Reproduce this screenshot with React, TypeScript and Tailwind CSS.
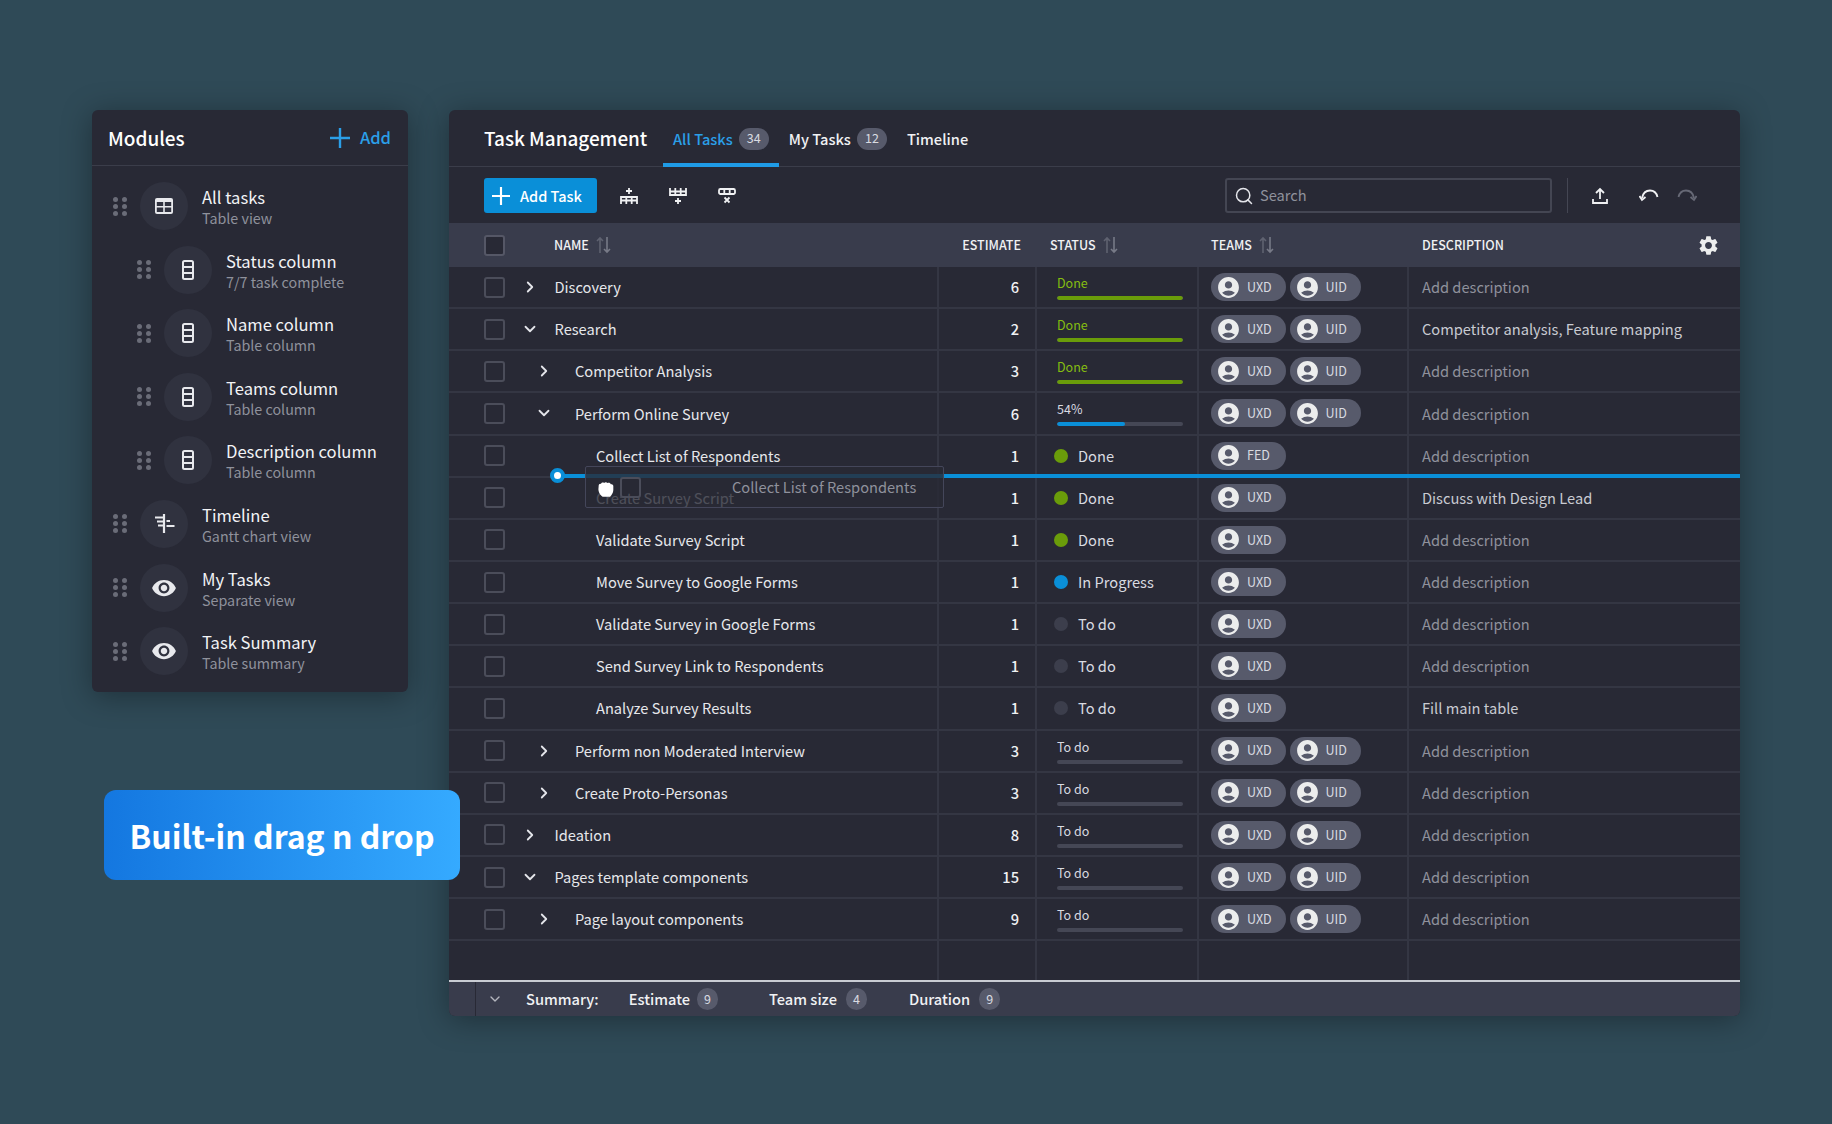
import React from "react";
import { ChevronDown, ChevronRight, Search } from "lucide-react";
import { MdAccountCircle, MdSettings, MdVisibility } from "react-icons/md";

type Status =
  | { kind: "bar"; label: string; value: number; tone: "green" | "blue" | "none" }
  | { kind: "dot"; label: string; tone: "green" | "blue" | "none" };

type Row = {
  name: string;
  level: 0 | 1 | 2;
  open?: boolean;
  estimate: number;
  status: Status;
  teams: string[];
  description?: string;
};

const barDone: Status = { kind: "bar", label: "Done", value: 100, tone: "green" };
const barTodo: Status = { kind: "bar", label: "To do", value: 0, tone: "none" };
const dotDone: Status = { kind: "dot", label: "Done", tone: "green" };
const dotTodo: Status = { kind: "dot", label: "To do", tone: "none" };
const both = ["UXD", "UID"];

const rows: Row[] = [
  { name: "Discovery", level: 0, open: false, estimate: 6, status: barDone, teams: both },
  { name: "Research", level: 0, open: true, estimate: 2, status: barDone, teams: both, description: "Competitor analysis, Feature mapping" },
  { name: "Competitor Analysis", level: 1, open: false, estimate: 3, status: barDone, teams: both },
  { name: "Perform Online Survey", level: 1, open: true, estimate: 6, status: { kind: "bar", label: "54%", value: 54, tone: "blue" }, teams: both },
  { name: "Collect List of Respondents", level: 2, estimate: 1, status: dotDone, teams: ["FED"] },
  { name: "Create Survey Script", level: 2, estimate: 1, status: dotDone, teams: ["UXD"], description: "Discuss with Design Lead" },
  { name: "Validate Survey Script", level: 2, estimate: 1, status: dotDone, teams: ["UXD"] },
  { name: "Move Survey to Google Forms", level: 2, estimate: 1, status: { kind: "dot", label: "In Progress", tone: "blue" }, teams: ["UXD"] },
  { name: "Validate Survey in Google Forms", level: 2, estimate: 1, status: dotTodo, teams: ["UXD"] },
  { name: "Send Survey Link to Respondents", level: 2, estimate: 1, status: dotTodo, teams: ["UXD"] },
  { name: "Analyze Survey Results", level: 2, estimate: 1, status: dotTodo, teams: ["UXD"], description: "Fill main table" },
  { name: "Perform non Moderated Interview", level: 1, open: false, estimate: 3, status: barTodo, teams: both },
  { name: "Create Proto-Personas", level: 1, open: false, estimate: 3, status: barTodo, teams: both },
  { name: "Ideation", level: 0, open: false, estimate: 8, status: barTodo, teams: both },
  { name: "Pages template components", level: 0, open: true, estimate: 15, status: barTodo, teams: both },
  { name: "Page layout components", level: 1, open: false, estimate: 9, status: barTodo, teams: both },
];

const modules = [
  { title: "All tasks", sub: "Table view", icon: "table", nested: false },
  { title: "Status column", sub: "7/7 task complete", icon: "column", nested: true },
  { title: "Name column", sub: "Table column", icon: "column", nested: true },
  { title: "Teams column", sub: "Table column", icon: "column", nested: true },
  { title: "Description column", sub: "Table column", icon: "column", nested: true },
  { title: "Timeline", sub: "Gantt chart view", icon: "timeline", nested: false },
  { title: "My Tasks", sub: "Separate view", icon: "eye", nested: false },
  { title: "Task Summary", sub: "Table summary", icon: "eye", nested: false },
];

const nameWidth = ["w-[49.5px]", "w-[70px]", "w-[91px]"];
const chevronPad = ["pl-[16px]", "pl-[30px]", "pl-0"];
const gridCols = "grid grid-cols-[490px_98px_162px_210px_1fr]";

function PlusIcon({ size }: { size: number }) {
  return (
    <svg width={size} height={size} viewBox="0 0 20 20" fill="none" stroke="currentColor" strokeWidth="2.4">
      <path d="M10 0v20M0 10h20" />
    </svg>
  );
}

function ModuleIcon({ icon }: { icon: string }) {
  if (icon === "eye") return <MdVisibility size={26} className="text-[#e8e9ed]" />;
  if (icon === "table") {
    return (
      <svg width="18" height="16" viewBox="0 0 18 16">
        <rect width="18" height="16" rx="2" fill="#e8e9ed" />
        <rect x="1.800" y="4" width="6.400" height="4" fill="#30323f" />
        <rect x="9.800" y="4" width="6.400" height="4" fill="#30323f" />
        <rect x="1.800" y="9.500" width="6.400" height="4.500" fill="#30323f" />
        <rect x="9.800" y="9.500" width="6.400" height="4.500" fill="#30323f" />
      </svg>
    );
  }
  if (icon === "column") {
    return (
      <svg width="12" height="20" viewBox="0 0 12 20" fill="none" stroke="#e8e9ed" strokeWidth="2">
        <rect x="1" y="1" width="10" height="18" rx="1.500" />
        <path d="M1 7h10M1 13h10" />
      </svg>
    );
  }
  return (
    <svg width="21" height="19" viewBox="0 0 21 19" fill="none" stroke="#e8e9ed" strokeWidth="2.200">
      <path d="M10 0v19M1 3.500h9M3 7.500h7M4 11.500h6M12.500 7h3.500M12.500 12h8" />
    </svg>
  );
}

function DragDots() {
  return (
    <div className="grid grid-cols-2 gap-x-[6px] gap-y-[2px] w-[11px]">
      {[0, 1, 2, 3, 4, 5].map(i => (
        <span key={i} className="w-[5px] h-[5px] rounded-full bg-[#6a6c78]" />
      ))}
    </div>
  );
}

function ModulesPanel() {
  return (
    <div className="w-[316px] h-[582px] shrink-0 bg-[#282935] rounded-[6px] shadow-[0_4px_30px_rgba(0,0,0,0.35)]">
      <div className="h-[56px] flex items-center justify-between pl-[16px] pr-[17px] border-b border-[#3b3d4a]">
        <span className="text-[19px] font-medium text-white pt-[1px]">Modules</span>
        <div className="flex items-center gap-[10px] text-[#2b9fe8]">
          <PlusIcon size={20} />
          <span className="text-[16.500px] font-medium">Add</span>
        </div>
      </div>
      <div className="flex flex-col gap-[15.600px] pt-[16px]">
        {modules.map(m => (
          <div key={m.title} className={m.nested ? "flex items-center pl-[45px]" : "flex items-center pl-[21px]"}>
            <DragDots />
            <div className="ml-[16px] w-[48px] h-[48px] rounded-full bg-[#30323f] flex items-center justify-center">
              <ModuleIcon icon={m.icon} />
            </div>
            <div className="ml-[14px] pt-[2px] flex flex-col">
              <span className="text-[16.600px] leading-[22px] text-[#f2f3f5]">{m.title}</span>
              <span className="text-[14.300px] leading-[20px] text-[#8f919c]">{m.sub}</span>
            </div>
          </div>
        ))}
      </div>
    </div>
  );
}

function SortIcon() {
  return (
    <svg width="15" height="18" viewBox="0 0 15 18" fill="none" stroke="#5f6270" strokeWidth="1.600">
      <path d="M4 17V2M1 5l3-3 3 3" />
      <path d="M11 1v15M8 13l3 3 3-3" stroke="#777a87" />
    </svg>
  );
}

function Check({ dark }: { dark?: boolean }) {
  return (
    <span className={dark ? "block w-[21px] h-[21px] rounded-[3px] border-2 border-[#555766] bg-[#282935]" : "block w-[21px] h-[21px] rounded-[3px] border-2 border-[#4b4d5a]"} />
  );
}

function Teams({ teams }: { teams: string[] }) {
  return (
    <div className="flex items-center gap-[3.500px]">
      {teams.map(t => (
        <span key={t} className={t === "UID" ? "h-[28px] w-[71px] rounded-full bg-[#575a6b] flex items-center pl-[6px] text-[12.500px] text-[#d9dbe1]" : "h-[28px] w-[75px] rounded-full bg-[#575a6b] flex items-center pl-[6px] text-[12.500px] text-[#d9dbe1]"}>
          <MdAccountCircle size={25} className="text-[#eceded] -ml-[1px]" />
          <span className="ml-[6px]">{t}</span>
        </span>
      ))}
    </div>
  );
}

function StatusCell({ status }: { status: Status }) {
  if (status.kind === "dot") {
    const dot = status.tone === "green" ? "bg-[#6a9c0a]" : status.tone === "blue" ? "bg-[#0a8fd8]" : "bg-[#3c3e4c]";
    return (
      <div className="flex items-center pl-[17px]">
        <span className={`w-[14px] h-[14px] rounded-full ${dot}`} />
        <span className="ml-[10px] text-[14.650px] text-[#d9dbe1]">{status.label}</span>
      </div>
    );
  }
  const text = status.tone === "green" ? "text-[#85bd10]" : "text-[#d9dbe1]";
  const fill = status.tone === "green" ? "bg-[#6a9c0a]" : "bg-[#0a8fd8]";
  return (
    <div className="pl-[20px] pr-[14px] flex flex-col justify-center">
      <span className={`text-[12.500px] leading-[18px] ${text}`}>{status.label}</span>
      <div className="mt-[4px] h-[4px] rounded-full bg-[#454755] overflow-hidden">
        <div className={`h-full rounded-full ${fill}`} style={{ width: `${status.value}%` }} />
      </div>
    </div>
  );
}

function TableRow({ row }: { row: Row }) {
  return (
    <div className={`${gridCols} h-[42.150px] border-b-2 border-[#343643]`}>
      <div className="flex items-center pl-[35px] border-r-2 border-[#343643]">
        <Check />
        <div className={`${nameWidth[row.level]} ${chevronPad[row.level]} flex items-center shrink-0`}>
          {row.open === true && <ChevronDown size={18} className="text-[#e4e5ea]" strokeWidth={2.400} />}
          {row.open === false && <ChevronRight size={18} className="text-[#e4e5ea]" strokeWidth={2.400} />}
        </div>
        <span className="text-[14.650px] text-[#e6e7eb] whitespace-nowrap">{row.name}</span>
      </div>
      <div className="flex items-center justify-end pr-[16px] border-r-2 border-[#343643] text-[14.650px] font-medium text-[#f0f1f3]">
        {row.estimate}
      </div>
      <div className="flex flex-col justify-center border-r-2 border-[#343643]">
        <StatusCell status={row.status} />
      </div>
      <div className="flex items-center pl-[12px] border-r-2 border-[#343643]">
        <Teams teams={row.teams} />
      </div>
      <div className={row.description ? "flex items-center pl-[13px] text-[14.650px] text-[#c9cbd2]" : "flex items-center pl-[13px] text-[14.650px] text-[#8f919c]"}>
        {row.description ?? "Add description"}
      </div>
    </div>
  );
}

function ToolbarIcon({ kind }: { kind: "above" | "below" | "remove" }) {
  if (kind === "above") {
    return (
      <svg width="18" height="18" viewBox="0 0 18 18" fill="none" stroke="#f0f1f3" strokeWidth="1.800">
        <path d="M9 1v6M6 4h6" />
        <path d="M1 17v-7h16v7M1 13.500h16M6.300 10v7M11.700 10v7" />
      </svg>
    );
  }
  if (kind === "below") {
    return (
      <svg width="18" height="18" viewBox="0 0 18 18" fill="none" stroke="#f0f1f3" strokeWidth="1.800">
        <path d="M1 1v7h16V1M1 4.500h16M6.300 1v7M11.700 1v7" />
        <path d="M9 11v6M6 14h6" />
      </svg>
    );
  }
  return (
    <svg width="18" height="18" viewBox="0 0 18 18" fill="none" stroke="#f0f1f3" strokeWidth="1.800">
      <rect x="1" y="2" width="16" height="5" rx="1.500" />
      <path d="M6.300 2v5M11.700 2v5" />
      <path d="M6.500 10.500l5 5M11.500 10.500l-5 5" />
    </svg>
  );
}

function Tab({ label, count, active }: { label: string; count?: number; active?: boolean }) {
  return (
    <div className={active ? "h-[57px] flex items-center gap-[6px] px-[10px] border-b-[4px] border-[#1f9be6] pt-[4px]" : "h-[57px] flex items-center gap-[6px] px-[10px]"}>
      <span className={active ? "text-[14.650px] font-medium text-[#2b9fe8]" : "text-[14.650px] font-medium text-[#f0f1f3]"}>{label}</span>
      {count !== undefined && (
        <span className="w-[30px] h-[22px] rounded-full bg-[#575a6b] flex items-center justify-center text-[12.500px] text-[#d9dbe1]">{count}</span>
      )}
    </div>
  );
}

function TaskPanel() {
  return (
    <div className="relative w-[1291px] h-[906px] shrink-0 ml-[41px] bg-[#282935] rounded-[6px] shadow-[0_4px_30px_rgba(0,0,0,0.35)] flex flex-col overflow-hidden">
      <div className="h-[57px] flex items-center pl-[35px] border-b border-[#3b3d4a] shrink-0">
        <span className="text-[18.900px] font-medium text-white w-[168px] whitespace-nowrap">Task Management</span>
        <div className="h-[56px] flex items-start ml-[11px]">
          <Tab label="All Tasks" count={34} active />
          <Tab label="My Tasks" count={12} />
          <Tab label="Timeline" />
        </div>
      </div>

      <div className="h-[56px] flex items-center pl-[35px] pt-[1px] shrink-0">
        <button className="h-[35px] w-[113px] rounded-[3px] bg-[#0a8fd8] flex items-center pl-[8px] gap-[10px] text-[14.500px] font-medium text-white">
          <PlusIcon size={18} />
          Add Task
        </button>
        <div className="flex items-center gap-[31px] ml-[23px]">
          <ToolbarIcon kind="above" />
          <ToolbarIcon kind="below" />
          <ToolbarIcon kind="remove" />
        </div>
        <div className="ml-[489px] w-[327px] h-[35px] rounded-[3px] border-2 border-[#444653] flex items-center pl-[7px] gap-[6px]">
          <Search size={20} className="text-[#e4e5ea]" strokeWidth={1.800} />
          <span className="text-[14.650px] text-[#8f919c] pb-[2px]">Search</span>
        </div>
        <div className="ml-[15px] w-px h-[35px] bg-[#444653]" />
        <svg className="ml-[23px]" width="18" height="18" viewBox="0 0 18 18" fill="none" stroke="#f0f1f3" strokeWidth="1.800">
          <path d="M9 12V2M5 6l4-4 4 4M2 12v4h14v-4" />
        </svg>
        <svg className="ml-[30px]" width="20" height="16" viewBox="0 0 20 16" fill="none" stroke="#f0f1f3" strokeWidth="1.800">
          <path d="M3 10C4 5 7 2.500 11 2.500s6.500 2.500 7.500 6.500" />
          <path d="M0.500 8l2.500 4 3.500-3" />
        </svg>
        <svg className="ml-[18px]" width="20" height="16" viewBox="0 0 20 16" fill="none" stroke="#666875" strokeWidth="1.800">
          <path d="M17 10C16 5 13 2.500 9 2.500S2.500 5 1.500 9" />
          <path d="M19.500 8L17 12l-3.500-3" />
        </svg>
      </div>

      <div className={`${gridCols} h-[44px] bg-[#393c4c] shrink-0 text-[12.500px] font-medium text-[#f0f1f3]`}>
        <div className="flex items-center pl-[35px]">
          <Check dark />
          <span className="ml-[49px]">NAME</span>
          <span className="ml-[7px]"><SortIcon /></span>
        </div>
        <div className="flex items-center justify-end pr-[16px]">ESTIMATE</div>
        <div className="flex items-center pl-[13px] gap-[7px]">STATUS <SortIcon /></div>
        <div className="flex items-center pl-[12px] gap-[7px]">TEAMS <SortIcon /></div>
        <div className="flex items-center justify-between pl-[13px] pr-[20px]">
          DESCRIPTION
          <MdSettings size={23} className="text-[#eceded]" />
        </div>
      </div>

      <div className="shrink-0">
        {rows.map(r => (
          <TableRow key={r.name} row={r} />
        ))}
      </div>

      <div className={`${gridCols} flex-1`}>
        <div className="border-r-2 border-[#343643]" />
        <div className="border-r-2 border-[#343643]" />
        <div className="border-r-2 border-[#343643]" />
        <div className="border-r-2 border-[#343643]" />
      </div>

      <div className="h-[36px] shrink-0 bg-[#393c4c] border-t-2 border-[#c9ccd3] flex items-center text-[14.650px] font-medium text-[#f0f1f3]">
        <div className="w-[27px] h-full border-r border-[#282935]" />
        <ChevronDown size={16} className="ml-[11px] text-[#b4b6be]" />
        <span className="ml-[23px]">Summary:</span>
        <span className="ml-[30px]">Estimate</span>
        <span className="ml-[7px] w-[21px] h-[22px] rounded-full bg-[#575a6b] flex items-center justify-center text-[12.500px] font-normal text-[#d9dbe1]">9</span>
        <span className="ml-[51px]">Team size</span>
        <span className="ml-[9px] w-[21px] h-[22px] rounded-full bg-[#575a6b] flex items-center justify-center text-[12.500px] font-normal text-[#d9dbe1]">4</span>
        <span className="ml-[42px]">Duration</span>
        <span className="ml-[9px] w-[21px] h-[22px] rounded-full bg-[#575a6b] flex items-center justify-center text-[12.500px] font-normal text-[#d9dbe1]">9</span>
      </div>

      {/* drop target line and the dragged row, over the table */}
      <div className="absolute left-[115px] right-0 top-[364px] h-[4px] bg-[#0a8fd8]" />
      <div className="absolute left-[101px] top-[358px] w-[15px] h-[15px] rounded-full bg-white border-[4px] border-[#0a8fd8]" />
      <div className="absolute left-[136px] top-[356px] w-[359px] h-[42px] rounded-[2px] border border-[#44465a] bg-[#282935]/80 text-[#8f919c]">
        <span className="absolute left-[34px] top-[10px] block"><Check /></span>
        <span className="absolute left-[146px] top-[9px] text-[14.650px] whitespace-nowrap">Collect List of Respondents</span>
        <svg className="absolute left-[11px] top-[14px]" width="18" height="17" viewBox="0 0 16 15" fill="#fff">
          <path d="M1.500 4c0-1 1-2 2-1.500C4 1.200 5.500 1 6.300 1.700c.7-1 2.400-.9 3 .1 1-.8 2.800-.2 3 1 .9-.2 2.200.4 2.200 1.500v3.700c0 2.500-1.500 4.500-3 6H5C3.500 13 2 11 1.500 9 1 7.500 1.500 6 1.500 4z" />
        </svg>
      </div>
    </div>
  );
}

export default function App() {
  return (
    <div className="relative w-[1832px] h-[1124px] overflow-hidden bg-[#2f4a57] flex items-start pl-[92px] pt-[110px] font-['Noto_Sans_CJK_SC',sans-serif]">
      <ModulesPanel />
      <TaskPanel />
      <div className="absolute left-[104px] top-[790px] w-[356px] h-[90px] rounded-[12px] bg-gradient-to-r from-[#1477e0] to-[#35aaff] flex items-center justify-center text-[32px] font-bold text-white">
        Built-in drag n drop
      </div>
    </div>
  );
}
